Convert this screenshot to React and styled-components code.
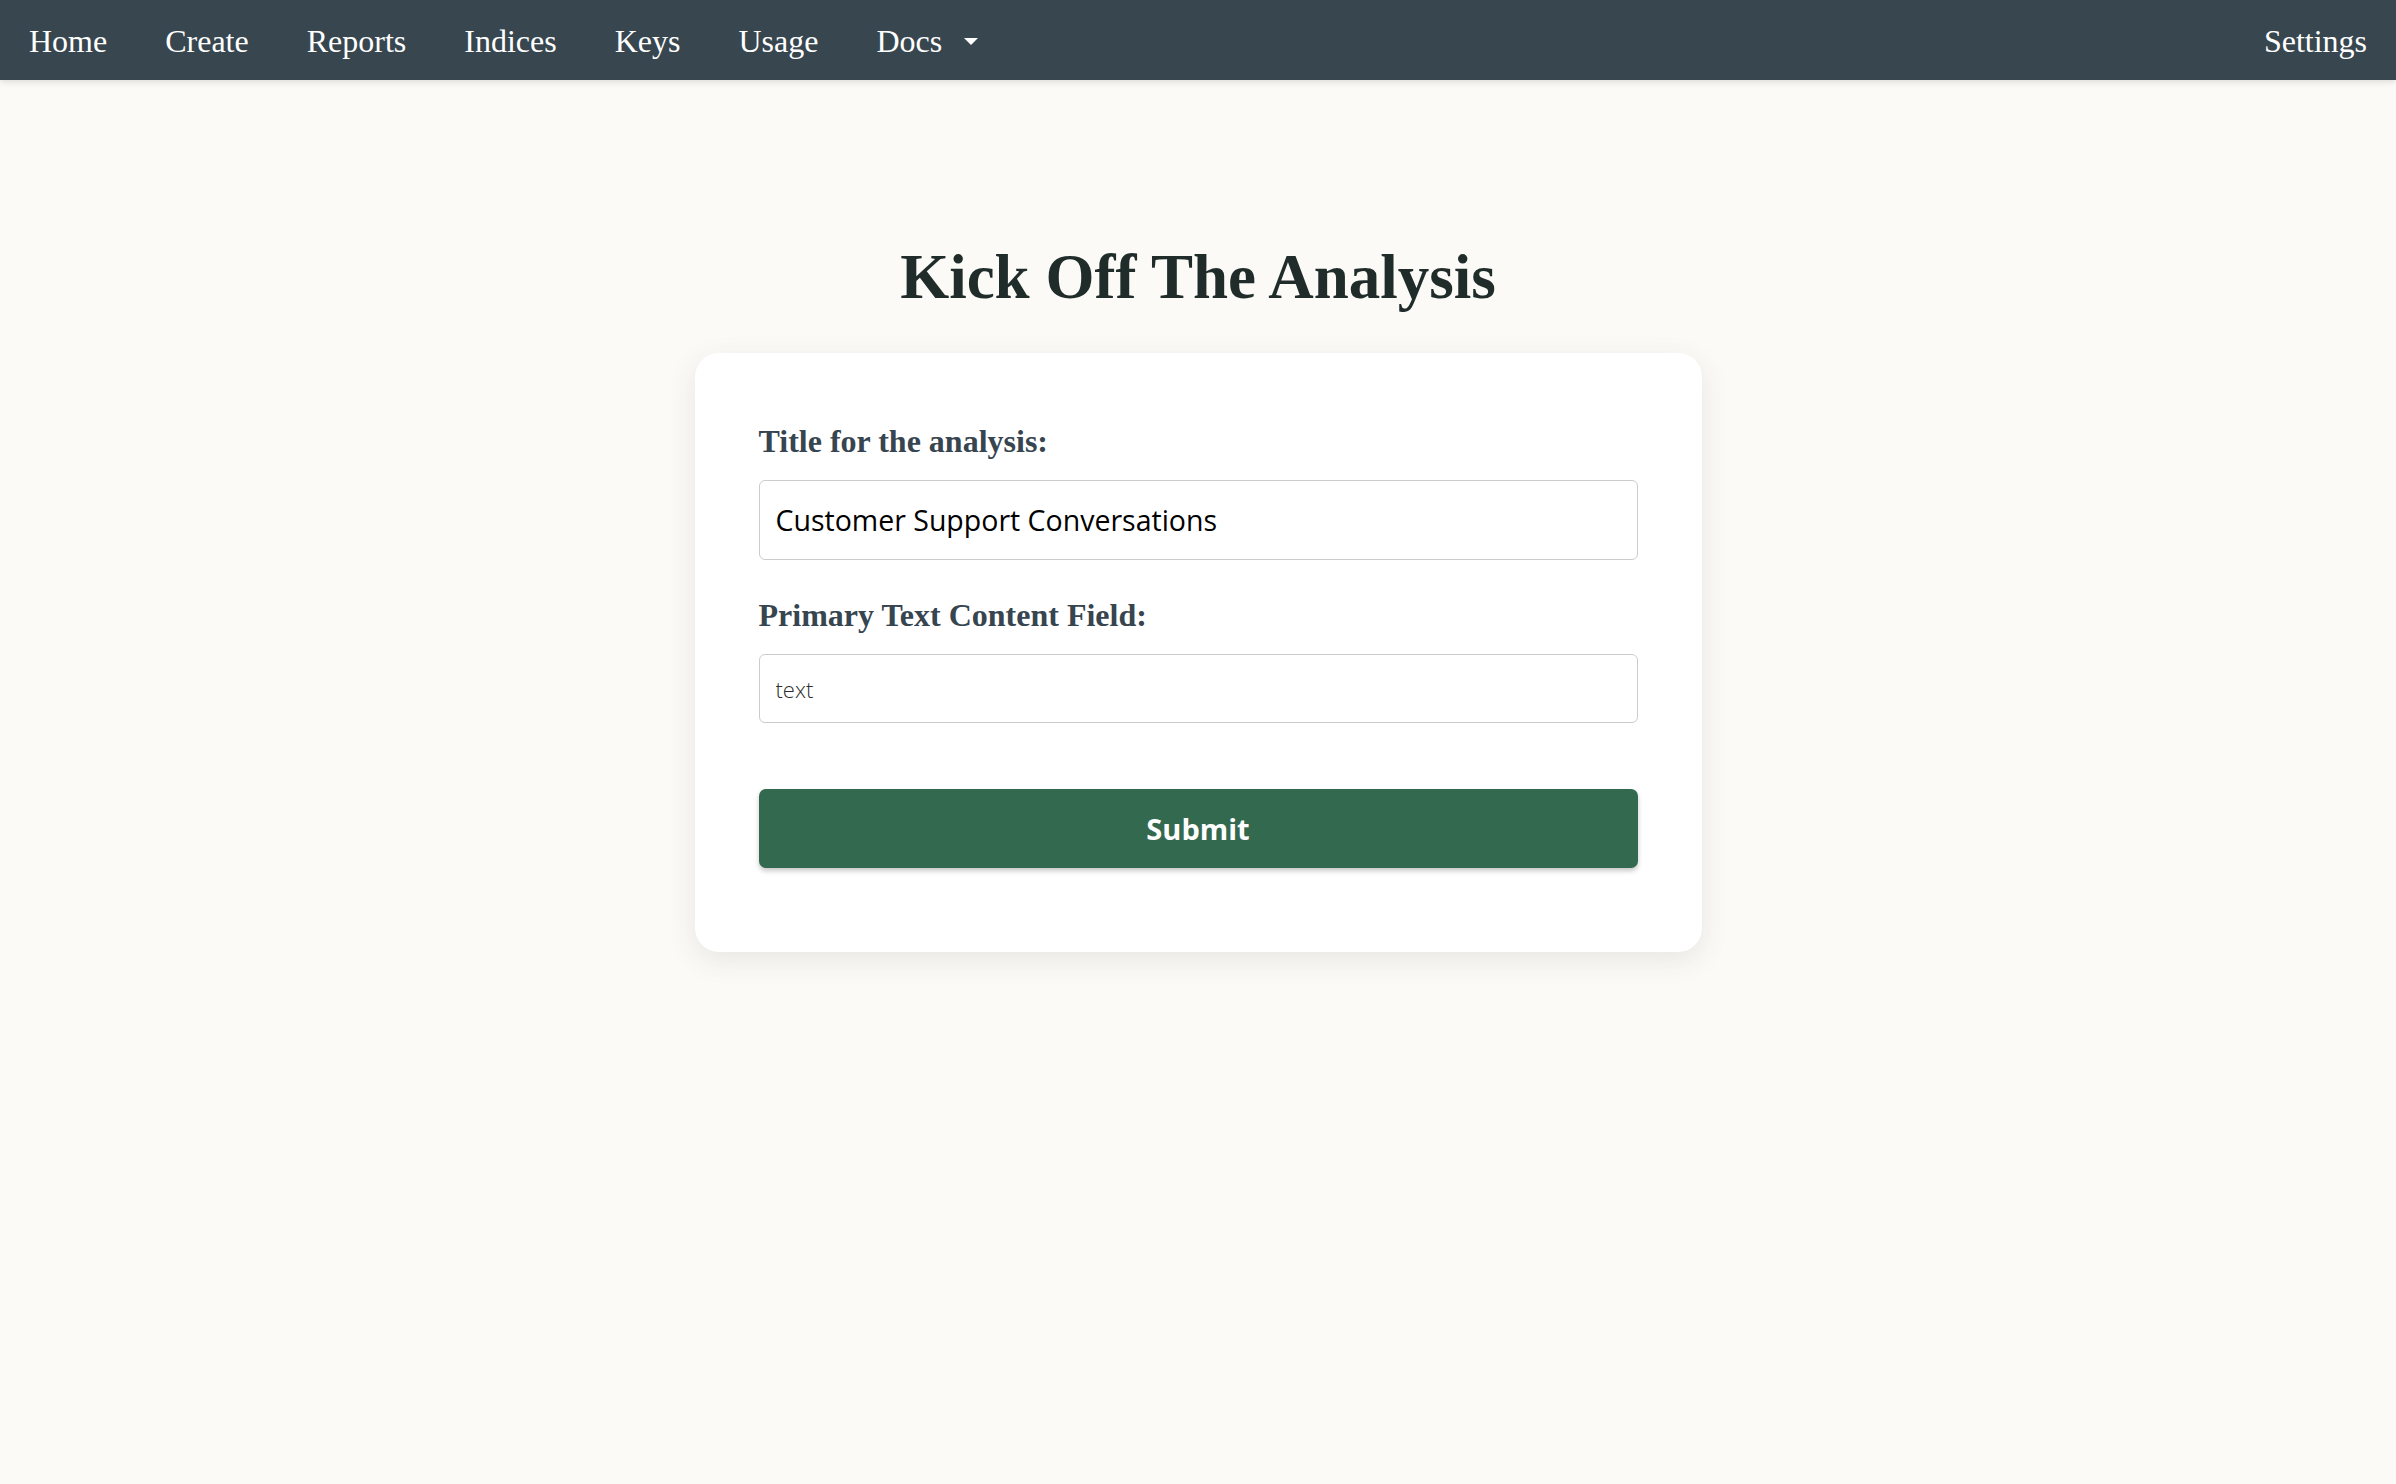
import React, { useState } from 'react';
import styled, { createGlobalStyle } from 'styled-components';

const GlobalStyle = createGlobalStyle`
  html, body {
    margin: 0;
    padding: 0;
    background: #fbfaf7;
  }

  body {
    font-family: 'Liberation Serif', 'Times New Roman', serif;
    min-height: 1484px;
  }

  * {
    box-sizing: border-box;
  }
`;

const StyledNav = styled.nav`
  display: flex;
  align-items: center;
  justify-content: space-between;
  height: 80px;
  padding-top: 2px;
  background-color: #37464f;
  box-shadow: 0 2px 6px rgba(0, 0, 0, 0.12);

  .nav-left {
    display: flex;
    align-items: center;
  }
`;

const NavLink = styled.a`
  display: flex;
  align-items: center;
  padding: 0 29px;
  color: #ffffff;
  font-family: 'Liberation Serif', 'Times New Roman', serif;
  font-size: 32px;
  text-decoration: none;
  cursor: pointer;

  svg {
    margin-left: 22px;
    width: 14px;
    height: 7px;
  }
`;

const StyledMain = styled.main`
  display: flex;
  flex-direction: column;
  align-items: center;
  padding-top: 161px;

  h1 {
    margin: 0 0 40px;
    color: #1f2c2a;
    font-family: 'Liberation Serif', 'Times New Roman', serif;
    font-size: 63px;
    font-weight: 700;
    line-height: 1.15;
  }
`;

const Card = styled.form`
  display: flex;
  flex-direction: column;
  width: 1007px;
  padding: 70px 64px 84px;
  border-radius: 24px;
  background-color: #ffffff;
  box-shadow: 0 8px 28px rgba(60, 55, 40, 0.1);
`;

const Label = styled.label`
  display: block;
  margin-top: ${({ $first }) => ($first ? '0' : '37px')};
  margin-bottom: 20px;
  color: #36454f;
  font-family: 'Liberation Serif', 'Times New Roman', serif;
  font-size: 32px;
  font-weight: 700;
`;

const Input = styled.input`
  display: block;
  width: 100%;
  height: ${({ $large }) => ($large ? '80px' : '69px')};
  padding: 0 16px;
  border: 1.5px solid #cccccc;
  border-radius: 6px;
  background: #ffffff;
  color: #000000;
  font-family: 'Open Sans', 'Noto Sans', sans-serif;
  font-size: ${({ $large }) => ($large ? '28.5px' : '22px')};
  outline: none;

  &::placeholder {
    color: #2e2e2e;
    opacity: 1;
    font-weight: 300;
  }
`;

const SubmitButton = styled.button`
  width: 100%;
  height: 79px;
  margin-top: 66px;
  border: none;
  border-radius: 7px;
  background-color: #33694f;
  color: #ffffff;
  font-family: 'Open Sans', 'Noto Sans', sans-serif;
  font-size: 29px;
  font-weight: 700;
  box-shadow: 0 3px 5px rgba(0, 0, 0, 0.22);
  cursor: pointer;
`;

const links = ['Home', 'Create', 'Reports', 'Indices', 'Keys', 'Usage'];

const App = () => {
  const [title, setTitle] = useState('Customer Support Conversations');
  const [field, setField] = useState('');

  return (
    <>
      <GlobalStyle />
      <StyledNav>
        <div className="nav-left">
          {links.map(link => (
            <NavLink key={link}>{link}</NavLink>
          ))}
          <NavLink>
            Docs
            <svg viewBox="0 0 14 7" aria-hidden="true">
              <path d="M0 0 L14 0 L7 7 Z" fill="#ffffff" />
            </svg>
          </NavLink>
        </div>
        <NavLink>Settings</NavLink>
      </StyledNav>

      <StyledMain>
        <h1>Kick Off The Analysis</h1>
        <Card onSubmit={e => e.preventDefault()}>
          <Label $first htmlFor="title">
            Title for the analysis:
          </Label>
          <Input
            id="title"
            $large
            value={title}
            onChange={e => setTitle(e.target.value)}
          />

          <Label htmlFor="field">Primary Text Content Field:</Label>
          <Input
            id="field"
            placeholder="text"
            value={field}
            onChange={e => setField(e.target.value)}
          />

          <SubmitButton type="submit">Submit</SubmitButton>
        </Card>
      </StyledMain>
    </>
  );
};

export default App;
